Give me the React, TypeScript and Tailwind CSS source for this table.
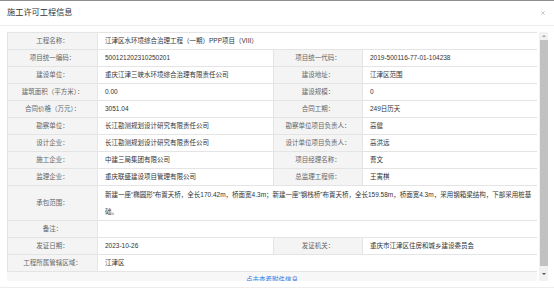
import { X } from 'lucide-react';

type Row =
  | { kind: 'pair'; l1: string; v1: string; l2: string; v2: string }
  | { kind: 'wide'; l: string; v: string[]; tall?: boolean };

const rows: Row[] = [
  { kind: 'wide', l: '工程名称：', v: ['江津区水环境综合治理工程（一期）PPP项目（VIII）'] },
  { kind: 'pair', l1: '项目统一编码：', v1: '500121202310250201', l2: '项目统一代码：', v2: '2019-500116-77-01-104238' },
  { kind: 'pair', l1: '建设单位：', v1: '重庆江津三峡水环境综合治理有限责任公司', l2: '建设地址：', v2: '江津区范围' },
  { kind: 'pair', l1: '建筑面积（平方米）：', v1: '0.00', l2: '建设规模：', v2: '0' },
  { kind: 'pair', l1: '合同价格（万元）：', v1: '3051.04', l2: '合同工期：', v2: '249日历天' },
  { kind: 'pair', l1: '勘察单位：', v1: '长江勘测规划设计研究有限责任公司', l2: '勘察单位项目负责人：', v2: '高健' },
  { kind: 'pair', l1: '设计企业：', v1: '长江勘测规划设计研究有限责任公司', l2: '设计单位项目负责人：', v2: '高洪远' },
  { kind: 'pair', l1: '施工企业：', v1: '中建三局集团有限公司', l2: '项目经理名称：', v2: '曹文' },
  { kind: 'pair', l1: '监理企业：', v1: '重庆联盛建设项目管理有限公司', l2: '总监理工程师：', v2: '王寅棋' },
  {
    kind: 'wide',
    l: '承包范围：',
    v: [
      '新建一座“椭圆形”布置天桥，全长170.42m，桥面宽4.3m；新建一座“钢栈桥”布置天桥，全长159.58m，桥面宽4.3m，采用钢箱梁结构，下部采用桩基',
      '础。',
    ],
    tall: true,
  },
  { kind: 'wide', l: '备注：', v: [] },
  { kind: 'pair', l1: '发证日期：', v1: '2023-10-26', l2: '发证机关：', v2: '重庆市江津区住房和城乡建设委员会' },
  { kind: 'wide', l: '工程所属管辖区域：', v: ['江津区'] },
];

const labelCls = 'border border-[#e4e4e4] bg-[#f4f4f4] text-center text-[#666] whitespace-nowrap px-[2px]';
const valueCls = 'border border-[#e4e4e4] bg-white text-left text-[#333] px-[7px]';

export default function App() {
  return (
    <div
      className="w-[554px] h-[292px] bg-white overflow-hidden flex flex-col"
      style={{ fontFamily: '"Liberation Sans", "Noto Sans CJK SC", sans-serif' }}
    >
      <div className="h-px bg-[#8e8e8e]" />
      <div className="h-[25px] flex items-center justify-between pl-[7px] pr-[8px] border-b border-[#ececec]">
        <span className="text-[8.2px] text-[#333]">施工许可工程信息</span>
        <X className="w-[6px] h-[6px] text-[#b5b5b5]" strokeWidth={3} />
      </div>

      <div className="flex pl-[7px] pr-[6px] pt-[6px] gap-[2px]">
        <div className="w-[530px] h-[249px] overflow-hidden bg-[#f7f7f7]">
          <table className="table-fixed border-collapse w-[530px] text-[6.5px] leading-[16px]">
            <colgroup>
              <col className="w-[90px]" />
              <col className="w-[176px]" />
              <col className="w-[89px]" />
              <col className="w-[175px]" />
            </colgroup>
            <tbody>
              {rows.map((r, i) =>
                r.kind === 'pair' ? (
                  <tr key={i} className="h-[17px]">
                    <td className={labelCls}>{r.l1}</td>
                    <td className={valueCls}>{r.v1}</td>
                    <td className={labelCls}>{r.l2}</td>
                    <td className={valueCls}>{r.v2}</td>
                  </tr>
                ) : (
                  <tr key={i} className={r.tall ? 'h-[35px]' : 'h-[17px]'}>
                    <td className={labelCls}>{r.l}</td>
                    <td colSpan={3} className={`${valueCls} ${r.tall ? 'leading-[17px] pr-[2px]' : ''}`}>
                      {r.v.map((line, j) => (
                        <div key={j} className="whitespace-nowrap">
                          {line}
                        </div>
                      ))}
                    </td>
                  </tr>
                )
              )}
            </tbody>
          </table>
          <div className="pt-[3px] text-center text-[6.5px] leading-[10px] text-[#2a7ae2]">点击查看附件信息</div>
        </div>

        <div className="w-[9px] h-[249px] bg-[#f1f1f1] flex flex-col items-center">
          <div className="h-[8px] flex items-center justify-center">
            <div className="w-0 h-0 border-l-[2px] border-r-[2px] border-b-[2px] border-l-transparent border-r-transparent border-b-[#a3a3a3]" />
          </div>
          <div className="w-[8px] h-[226px] bg-[#c1c1c1]" />
          <div className="flex-1 flex items-center justify-center">
            <div className="w-0 h-0 border-l-[2px] border-r-[2px] border-t-[2px] border-l-transparent border-r-transparent border-t-[#505050]" />
          </div>
        </div>
      </div>

      <div className="mt-[6px] h-px bg-[#ededed]" />
    </div>
  );
}
